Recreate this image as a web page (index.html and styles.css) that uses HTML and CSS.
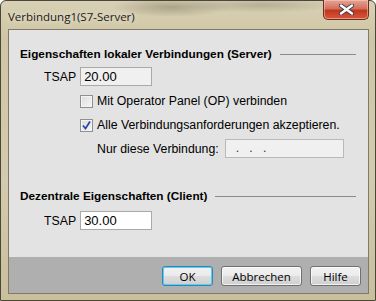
FILE: index.html
```html
<!DOCTYPE html>
<html>
<head>
    <link rel="stylesheet" href="styles.css">
</head>
<body>
    <div class="window">
        <div class="titlebar">
            <span class="title">Verbindung1(S7-Server)</span>
            <button class="close-btn" title="Schließen">
                <svg width="17" height="11" viewBox="0 0 17 11">
                    <path d="M3 1.5 L14 9.5 M14 1.5 L3 9.5" stroke="#3a3a4a" stroke-width="4.2" stroke-linecap="round"/>
                    <path d="M3 1.5 L14 9.5 M14 1.5 L3 9.5" stroke="#ffffff" stroke-width="2.4" stroke-linecap="round"/>
                </svg>
            </button>
        </div>
        <div class="client">
            <div class="content">
                <div class="section-title">Eigenschaften lokaler Verbindungen (Server)</div>
                <div class="field-row first">
                    <label class="field-label">TSAP</label>
                    <input class="text-field readonly" type="text" value="20.00">
                </div>
                <div class="check-row">
                    <span class="checkbox"></span>
                    <span>Mit Operator Panel (OP) verbinden</span>
                </div>
                <div class="check-row">
                    <span class="checkbox">
                        <svg width="11" height="11" viewBox="0 0 11 11">
                            <path d="M2 5.5 L4.5 8.5 L9 1.5" fill="none" stroke="#2d47a8" stroke-width="1.8"/>
                        </svg>
                    </span>
                    <span>Alle Verbindungsanforderungen akzeptieren.</span>
                </div>
                <div class="ip-row">
                    <span>Nur diese Verbindung:</span>
                    <div class="ip-field">.&nbsp;&nbsp;&nbsp;.&nbsp;&nbsp;&nbsp;.</div>
                </div>

                <div class="section-title second">Dezentrale Eigenschaften (Client)</div>
                <div class="field-row">
                    <label class="field-label">TSAP</label>
                    <input class="text-field" type="text" value="30.00">
                </div>
            </div>
            <div class="button-bar">
                <button class="dlg-btn default">OK</button>
                <button class="dlg-btn wide">Abbrechen</button>
                <button class="dlg-btn">Hilfe</button>
            </div>
        </div>
    </div>
</body>
</html>
```
FILE: styles.css
```css
body {
    margin: 0;
    width: 376px;
    height: 301px;
    overflow: hidden;
    font-family: "Liberation Sans", Arial, sans-serif;
    font-size: 12.3px;
    color: #000;
}

.window {
    position: relative;
    box-sizing: border-box;
    width: 376px;
    height: 301px;
    display: flex;
    flex-direction: column;
    padding: 0 6px 6px 7px;
    border: 1px solid #4a463c;
    border-radius: 6px 6px 0 0;
    background:
        radial-gradient(ellipse 60px 10px at 170px 6px, rgba(90, 80, 60, 0.35), transparent),
        radial-gradient(ellipse 80px 8px at 260px 4px, rgba(110, 100, 75, 0.3), transparent),
        linear-gradient(180deg, #d9d1b5 0%, #cfc6a4 12%, #d3cbad 60%, #c9bf9b 100%);
}

.titlebar {
    height: 28px;
    display: flex;
    align-items: center;
}

.title {
    font-family: "Open Sans", "Noto Sans", sans-serif;
    font-size: 11.5px;
    color: #1a1a1a;
    padding-top: 3px;
    text-shadow: 0 0 6px rgba(255, 255, 255, 0.8);
}

.close-btn {
    position: absolute;
    top: -1px;
    right: 6px;
    width: 46px;
    height: 20px;
    padding: 0;
    display: flex;
    align-items: center;
    justify-content: center;
    border: 1px solid #6d2a1e;
    border-top: none;
    border-radius: 0 0 5px 5px;
    background: linear-gradient(180deg, #e7a497 0%, #d2705c 45%, #c2361c 55%, #d5593b 100%);
    box-shadow: inset 0 0 0 1px rgba(255, 210, 190, 0.5);
}

.client {
    flex: 1;
    display: flex;
    flex-direction: column;
    border: 1px solid #80796a;
    background: #e3e3e3;
}

.content {
    flex: 1;
    padding: 16px 12px 0 11px;
}

.section-title {
    display: flex;
    align-items: center;
    gap: 8px;
    height: 16px;
    font-size: 11.8px;
    font-weight: bold;
}

.section-title::after {
    content: "";
    flex: 1;
    height: 1px;
    background: #8a8a8a;
}

.section-title.second {
    margin-top: 30px;
}

.field-row {
    display: flex;
    align-items: center;
    margin-top: 7px;
    padding-left: 24px;
    gap: 4px;
}

.field-row.first {
    margin-top: 5px;
}

.text-field {
    box-sizing: border-box;
    width: 72px;
    height: 19px;
    padding: 0 3px;
    border: 1px solid #a9a9a9;
    background: #fff;
    font-family: "Liberation Sans", Arial, sans-serif;
    font-size: 13px;
    color: #000;
    outline: none;
}

.text-field.readonly {
    background: #f0f0f0;
}

.check-row {
    display: flex;
    align-items: center;
    gap: 4px;
    height: 18px;
    margin-top: 6px;
    padding-left: 60px;
}

.checkbox {
    box-sizing: border-box;
    width: 13px;
    height: 13px;
    display: flex;
    align-items: center;
    justify-content: center;
    border: 1px solid #8e8f8f;
    background: linear-gradient(135deg, #dcdcdc, #f6f6f6);
    box-shadow: inset 0 0 0 1px #f4f4f4;
}

.ip-row {
    display: flex;
    align-items: center;
    gap: 6px;
    margin-top: 5px;
    padding-left: 77px;
}

.ip-field {
    box-sizing: border-box;
    width: 119px;
    height: 19px;
    padding-left: 10px;
    line-height: 16px;
    border: 1px solid #b9b9b9;
    background: #f0f0f0;
    color: #333;
}

.button-bar {
    height: 36px;
    display: flex;
    justify-content: flex-end;
    align-items: flex-start;
    gap: 8px;
    padding: 9px 7px 0 0;
    box-sizing: border-box;
    background: #afafaf;
}

.dlg-btn {
    box-sizing: border-box;
    width: 51px;
    height: 20px;
    padding: 0;
    border: 1px solid #707070;
    border-radius: 3px;
    background: linear-gradient(180deg, #f2f2f2 0%, #ebebeb 48%, #dddddd 52%, #cfcfcf 100%);
    box-shadow: inset 0 0 0 1px rgba(255, 255, 255, 0.7);
    font-family: "Open Sans", "Noto Sans", sans-serif;
    font-size: 11.5px;
    color: #000;
}

.dlg-btn.wide {
    width: 81px;
}

.dlg-btn.default {
    border-color: #3c7fb1;
    box-shadow: inset 0 0 0 1px #48d6f8;
}
```
